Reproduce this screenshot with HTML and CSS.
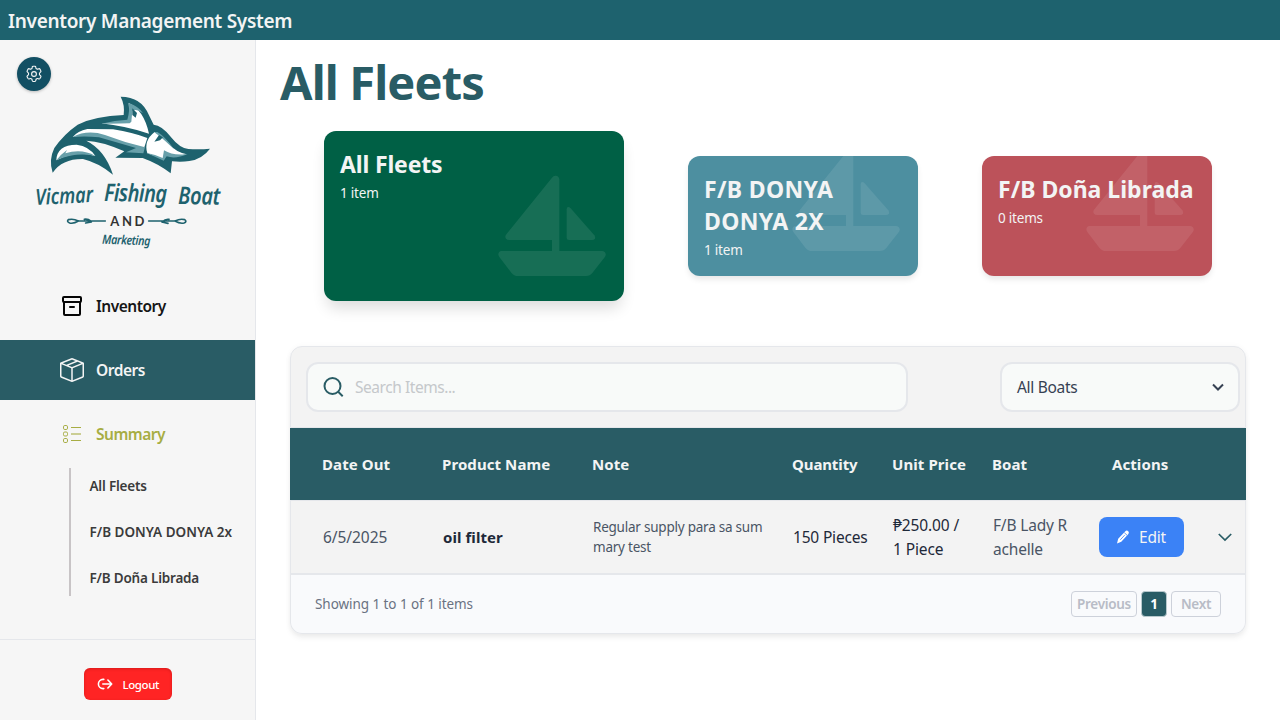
FILE: index.html
```html
<!DOCTYPE html>
<html lang="en">
<head>
<meta charset="utf-8">
<title>Inventory Management System</title>
<link rel="stylesheet" href="styles.css">
</head>
<body>
<svg class="defs" width="0" height="0" aria-hidden="true">
  <symbol id="boat" viewBox="0 0 324 304">
    <path d="M184 12Q182 0 172 1Q166 1 162 7L24 178Q20 184 24 190Q27 194 34 194H162V227H10Q2 228 1 237Q1 241 4 245L40 292Q48 302 60 302H264Q276 302 283 293L320 246Q324 241 323 236Q322 228 312 227H184Z"/>
    <path d="M206 102Q206 95 211 95Q214 95 218 99L289 180Q293 185 291 190Q288 194 282 194H213Q206 194 206 187Z"/>
  </symbol>
</svg>
<header class="topbar">Inventory Management System</header>
<div class="shell">
  <aside class="sidebar">
    <button class="settings" aria-label="Settings">
      <svg width="18" height="18" viewBox="0 0 24 24" fill="none" stroke="#f3f4f4" stroke-width="1.5" stroke-linejoin="round"><path d="M9.600 2.900c.1-.8.6-1.300 1.200-1.300h2.400c.6 0 1.100.5 1.200 1.300l.2 1.200c.1.500.4.800.8 1l.5.3c.4.200.8.200 1.200.1l1.300-.5c.6-.2 1.200 0 1.500.5l1.200 2.200c.3.500.2 1.200-.3 1.600l-1 .8c-.4.300-.5.700-.5 1.100v1.200c0 .4.100.8.500 1.100l1 .8c.5.400.6 1.100.3 1.600l-1.200 2.200c-.3.500-.9.700-1.500.5l-1.300-.5c-.4-.1-.8-.1-1.200.1l-.5.3c-.4.200-.7.500-.8 1l-.2 1.200c-.1.800-.6 1.300-1.200 1.300h-2.400c-.6 0-1.100-.5-1.200-1.300l-.2-1.200c-.1-.5-.4-.8-.8-1l-.5-.3c-.4-.2-.8-.2-1.200-.1l-1.300.5c-.6.2-1.200 0-1.500-.5l-1.200-2.200c-.3-.5-.2-1.200.3-1.600l1-.8c.4-.3.500-.7.500-1.100v-1.200c0-.4-.1-.8-.5-1.100l-1-.8c-.5-.4-.6-1.100-.3-1.600l1.200-2.200c.3-.5.900-.7 1.500-.5l1.300.5c.4.1.8.1 1.200-.1l.5-.3c.4-.2.700-.5.800-1z"/><circle cx="12" cy="12" r="3.200"/></svg>
    </button>
    <svg class="logo" width="205" height="170" viewBox="0 0 615 510">
      <path fill="#1e626e" d="M287 20Q350 20 372 76L386 104Q410 106 437 140Q464 174 490 177Q525 179 555 176Q532 207 493 213Q470 217 441 214L437 250Q400 221 353 204L271 203L298 184Q232 154 184 152Q240 180 264 254Q220 218 174 207Q112 206 83 248Q70 211 88 174Q116 133 158 104Q210 78 296 75Q300 45 287 20Z"/>
      <path fill="#fff" d="M311 39Q356 59 372 131Q300 108 229 100L315 99Z"/>
      <path fill="#68a0aa" d="M311 39Q343 50 354 70Q332 54 322 63L319 95L314 100L229 101Q270 91 307 89Q315 63 311 39Z"/>
      <path fill="#1e626e" d="M322 55L336 69L332 83L322 75Z"/>
      <path fill="#fff" d="M143 141Q158 123 187 117L264 118Q325 128 367 144L356 178Q277 151 214 136Q180 131 143 141Z"/>
      <path fill="#68a0aa" d="M143 141Q187 118 240 135Q300 158 360 172L355 190L303 187L333 174Q277 158 222 142Q181 137 143 141Z"/>
      <path fill="#fff" d="M94 211Q95 165 155 164Q193 169 211 198Q150 180 94 211Z"/>
      <path fill="#68a0aa" d="M94 211Q106 194 126 180L121 190Q171 175 211 198Q151 185 94 211Z"/>
      <path fill="#fff" d="M367 190Q355 152 389 126Q420 143 436 165Q451 185 485 193Q450 202 422 187L417 208Z"/>
      <path fill="#68a0aa" d="M363 188Q390 193 413 204L417 181Q444 198 488 192Q452 208 425 199L416 212Q388 199 363 188ZM388 127L397 126Q420 139 447 178Q418 150 404 139Z"/>
      <path fill="#1e626e" d="M402 135L414 142L405 151L388 155Z"/>
      <text class="logo-name" transform="translate(32 345) rotate(-3) scale(.82 1)" textLength="212">Vicmar</text>
      <text class="logo-name tall" transform="translate(237 333) rotate(1) scale(.82 1)" textLength="231">Fishing</text>
      <text class="logo-name tall" transform="translate(459 342) rotate(1) scale(.82 1)" textLength="154">Boat</text>
      <text class="logo-and" x="256" y="407" textLength="102">AND</text>
      <text class="logo-sub" transform="translate(231 461) rotate(2) scale(.85 1)" textLength="171">Marketing</text>
      <g fill="none" stroke="#1e626e" stroke-width="5" stroke-linecap="round">
        <path d="M241 393H160Q145 385 130 389Q124 395 134 399Q146 402 160 393M178 388Q188 386 199 394M182 399L199 396"/>
        <path d="M371 393H450Q466 385 479 389Q487 395 477 399Q465 402 450 393M432 388Q422 386 411 396M429 400L411 396"/>
      </g>
    </svg>
    <nav class="nav">
      <a class="nav-item">
        <svg width="24" height="24" viewBox="0 0 24 24" fill="none" stroke="#050505" stroke-width="2" stroke-linejoin="round" stroke-linecap="round"><rect x="3" y="3" width="18" height="5" rx="1"/><path d="M4 8v12a1 1 0 0 0 1 1h14a1 1 0 0 0 1-1V8M10 13h4"/></svg>
        <span>Inventory</span>
      </a>
      <a class="nav-item active">
        <svg width="24" height="24" viewBox="0 0 16 16" fill="#f3f4f4"><path d="M8.186 1.113a.5.5 0 0 0-.372 0L1.846 3.500l2.404.961L10.404 2zm3.564 1.426L5.596 5 8 5.961 14.154 3.500zm3.250 1.700-6.500 2.600v7.922l6.500-2.600V4.240zM7.500 14.762V6.838L1 4.239v7.923zM7.443.184a1.500 1.500 0 0 1 1.114 0l7.129 2.852A.5.5 0 0 1 16 3.500v8.662a1 1 0 0 1-.629.928l-7.185 2.874a.5.5 0 0 1-.372 0L.63 13.090a1 1 0 0 1-.63-.928V3.500a.5.5 0 0 1 .314-.464z"/></svg>
        <span>Orders</span>
      </a>
      <a class="nav-item summary">
        <svg width="24" height="24" viewBox="0 0 24 24" fill="none" stroke="#a7ad43"><rect x="3.500" y="3.500" width="4" height="4" rx="1.300"/><rect x="3.500" y="10" width="4" height="4" rx="1.300"/><rect x="3.500" y="16.500" width="4" height="4" rx="1.300"/><path d="M11 5.500H21M11 18.500H21"/><path d="M11 12H21" stroke-width="2" opacity=".55"/></svg>
        <span>Summary</span>
      </a>
    </nav>
    <div class="subnav">
      <a>All Fleets</a>
      <a class="caps">F/B DONYA DONYA 2x</a>
      <a>F/B Doña Librada</a>
    </div>
    <div class="side-foot">
      <button class="logout">
        <svg width="16" height="16" viewBox="0 0 16 16" fill="none" stroke="#fff" stroke-width="1.600" stroke-linecap="round" stroke-linejoin="round"><path d="M6.800 3.400H6A4.600 4.600 0 0 0 6 12.600H6.800M5.800 8H14.300M10.900 4L14.700 8L10.900 12"/></svg>
        <span>Logout</span>
      </button>
    </div>
  </aside>
  <main class="main">
    <h1>All Fleets</h1>
    <section class="cards">
      <article class="card big"><svg class="boat"><use href="#boat"/></svg><h2>All Fleets</h2><p>1 item</p></article>
      <article class="card blue"><svg class="boat"><use href="#boat"/></svg><h2>F/B DONYA<br>DONYA 2X</h2><p>1 item</p></article>
      <article class="card red"><svg class="boat"><use href="#boat"/></svg><h2>F/B Doña Librada</h2><p>0 items</p></article>
    </section>
    <section class="panel">
      <div class="toolbar">
        <div class="search">
          <svg width="24" height="24" viewBox="0 0 24 24" fill="none" stroke="#295c65" stroke-width="2"><circle cx="10.500" cy="11" r="8"/><path d="M16.200 16.800L20.700 21.200"/></svg>
          <span>Search Items...</span>
        </div>
        <div class="select">
          <span>All Boats</span>
          <svg width="14" height="14" viewBox="0 0 14 14" fill="none" stroke="#364153" stroke-width="2"><path d="M2 4.500L7 9.500L12 4.500"/></svg>
        </div>
      </div>
      <div class="grid thead">
        <span>Date Out</span><span>Product Name</span><span>Note</span><span class="quantity">Quantity</span><span>Unit Price</span><span>Boat</span><span class="actions-head">Actions</span>
      </div>
      <div class="grid row">
        <span class="date">6/5/2025</span>
        <span class="product">oil filter</span>
        <span class="note">Regular supply para sa sum<br>mary test</span>
        <span class="qty">150 Pieces</span>
        <span class="price">₱250.00 /<br>1 Piece</span>
        <span class="boatname">F/B Lady R<br>achelle</span>
        <div class="actions">
          <button class="edit"><svg width="16" height="16" viewBox="0 0 16 16"><path fill="#fff" d="M1 14.600L2.200 9.800L9.100 2.500Q10.800 .8 12.300 2.300Q13.600 3.700 12.200 5.200L5.300 12.700Z"/><path d="M4.300 10.800L8.700 6.100M8.300 3.700L11 6.200" stroke="#3b82f6" stroke-width=".8"/></svg><span>Edit</span></button>
          <svg width="14" height="14" viewBox="0 0 14 14" fill="none" stroke="#295c65" stroke-width="1.700"><path d="M.8 4L7 10L13.200 4"/></svg>
        </div>
      </div>
      <div class="pager">
        <span class="showing">Showing 1 to 1 of 1 items</span>
        <div class="pages"><button class="prev">Previous</button><button class="current">1</button><button class="next">Next</button></div>
      </div>
    </section>
  </main>
</div>
</body>
</html>
```
FILE: styles.css
```css
* { box-sizing: border-box; }
body { margin: 0; width: 1280px; height: 720px; overflow: hidden; background: #fff; font-family: "Noto Sans", "Open Sans", sans-serif; font-size: 16px; line-height: 24px; letter-spacing: -0.4px; }
h1, h2, p { margin: 0; }
button { font-family: inherit; letter-spacing: inherit; padding: 0; border: 0; }
span, a { white-space: nowrap; }
svg { flex: none; }
.defs { display: block; }
.topbar { height: 40px; padding-left: 8px; background: #1e626e; color: #f3f4f4; font-size: 19px; font-weight: 600; line-height: 42px; letter-spacing: -0.3px; }
.shell { display: flex; height: 680px; }
.sidebar { width: 256px; background: #f6f6f6; border-right: 1px solid #e5e7eb; display: flex; flex-direction: column; }
.settings { width: 34px; height: 34px; margin: 17px 0 0 17px; flex: none; border-radius: 50%; background: #124f63; display: flex; align-items: center; justify-content: center; box-shadow: 0 1px 3px rgba(0,0,0,.25); }
.logo { display: block; margin: -1px 0 0 25px; }
.logo-name { font-style: italic; font-size: 66px; font-weight: 600; fill: #1e626e; letter-spacing: 0; }
.logo-name.tall { font-size: 73px; }
.logo-and { font-family: Lato, sans-serif; font-weight: 700; font-size: 39px; fill: #333; }
.logo-sub { font-style: italic; font-size: 38px; font-weight: 600; fill: #1e626e; letter-spacing: 0; }
.nav { display: flex; flex-direction: column; gap: 4px; margin-top: 16px; }
.nav-item { height: 60px; padding-left: 60px; display: flex; align-items: center; gap: 12px; font-size: 15.500px; font-weight: 600; letter-spacing: -0.48px; color: #151515; }
.nav-item.active { background: #295c65; color: #f3f4f4; }
.nav-item.summary { color: #a7ad43; }
.subnav { margin: 4px 0 0 69px; height: 128px; border-left: 2px solid #c8c4c6; padding-left: 18.500px; display: flex; flex-direction: column; gap: 10px; font-size: 13.500px; font-weight: 600; letter-spacing: -0.2px; color: #3b3b3b; line-height: 36px; }
.subnav .caps { letter-spacing: 0; }
.side-foot { margin-top: auto; height: 81px; border-top: 1px solid #e5e7eb; padding-top: 28px; display: flex; justify-content: center; align-items: flex-start; }
.logout { width: 88px; height: 32px; border-radius: 6px; background: #ff2424; color: #fff; font-size: 11.500px; display: flex; align-items: center; padding-left: 13px; gap: 10px; font-weight: 500; box-shadow: inset 0 1px 3px rgba(120,0,0,.3); }
.main { flex: 1; padding: 11px 34px 0 24px; }
h1 { color: #295c65; font-size: 47px; font-weight: 700; line-height: 62px; letter-spacing: -0.870px; }
.cards { display: flex; align-items: center; height: 170px; margin: 18px 0 0 44px; }
.card { position: relative; overflow: hidden; width: 230px; height: 120px; border-radius: 12px; padding: 17px 16px; color: #f3f4f4; box-shadow: 0 4px 6px -1px rgba(0,0,0,.1); }
.card.big { width: 300px; height: 170px; background: #006045; box-shadow: 0 10px 15px -3px rgba(0,0,0,.14); }
.card.blue { background: #4d8fa0; margin-left: 64px; }
.card.red { background: #bc525a; margin-left: 64px; }
.card h2 { position: relative; font-size: 23px; line-height: 32px; letter-spacing: -0.170px; }
.card.blue h2 { letter-spacing: 0.350px; }
.card.red h2 { letter-spacing: 0; }
.card p { position: relative; font-size: 13.500px; line-height: 20px; letter-spacing: -0.2px; margin-top: 3px; }
.boat { position: absolute; right: 18px; bottom: 24px; width: 108px; height: 102px; fill: rgba(255,255,255,.09); }
.panel { width: 956px; height: 288px; margin: 45px 0 0 10px; border-radius: 12px; box-shadow: 0 4px 6px -1px rgba(0,0,0,.08), 0 0 6px rgba(0,0,0,.03); }
.toolbar { height: 82px; border: 1px solid #e5e7eb; border-radius: 12px 12px 0 0; background: #f3f3f3; padding: 15px 5px 0 15px; display: flex; justify-content: space-between; align-items: flex-start; }
.search, .select { height: 50px; border: 2px solid #e5e7eb; border-radius: 12px; background: #f8faf9; display: flex; align-items: center; }
.search { width: 602px; padding-left: 14px; gap: 9px; color: #c5c8cb; font-size: 15.500px; letter-spacing: -0.450px; }
.select { width: 240px; padding: 0 13px 0 15px; justify-content: space-between; color: #364153; font-size: 15.500px; letter-spacing: -0.3px; }
.select span { padding-bottom: 1px; }
.grid { display: grid; grid-template-columns: 120px 150px 200px 100px 100px 106px 1fr; align-items: center; }
.thead { height: 72px; padding-left: 32px; background: #295c65; color: #f3f4f4; font-weight: 700; font-size: 15px; letter-spacing: 0.080px; }
.thead .quantity { letter-spacing: -0.120px; }
.actions-head { padding-left: 14px; }
.row { height: 75px; padding-left: 32px; background: #f3f3f3; border: 1px solid #e5e7eb; border-bottom-width: 2px; color: #1e2939; font-size: 15.500px; letter-spacing: -0.180px; }
.date, .boatname { color: #4a5565; }
.date { letter-spacing: -0.060px; }
.product { font-weight: 700; color: #1e2939; font-size: 15px; letter-spacing: 0.060px; }
.note { font-size: 13.500px; line-height: 20px; color: #4a5565; letter-spacing: -0.230px; }
.price { letter-spacing: -0.120px; }
.actions { display: flex; align-items: center; justify-content: space-between; padding-right: 13px; }
.edit { width: 85px; height: 40px; border-radius: 8px; background: #3b82f6; color: #f3f4f4; display: flex; align-items: center; padding-left: 17px; gap: 7px; font-size: 15.500px; }
.pager { height: 59px; border: 1px solid #e5e7eb; border-top: 0; border-radius: 0 0 12px 12px; background: #f9fafc; padding: 0 24px; display: flex; align-items: center; justify-content: space-between; color: #6a7282; font-size: 13.500px; }
.showing { letter-spacing: -0.060px; }
.pages { display: flex; gap: 4px; }
.pages button { height: 26px; border: 1px solid #cdd1da; border-radius: 4px; background: #f9fafc; color: #b8bcc6; font-size: 13.500px; font-weight: 600; letter-spacing: -0.3px; }
.pages .prev { width: 66px; }
.pages .current { width: 26px; background: #295c65; color: #fff; font-weight: 700; border-color: #b8c9cd; }
.pages .next { width: 50px; }
```
